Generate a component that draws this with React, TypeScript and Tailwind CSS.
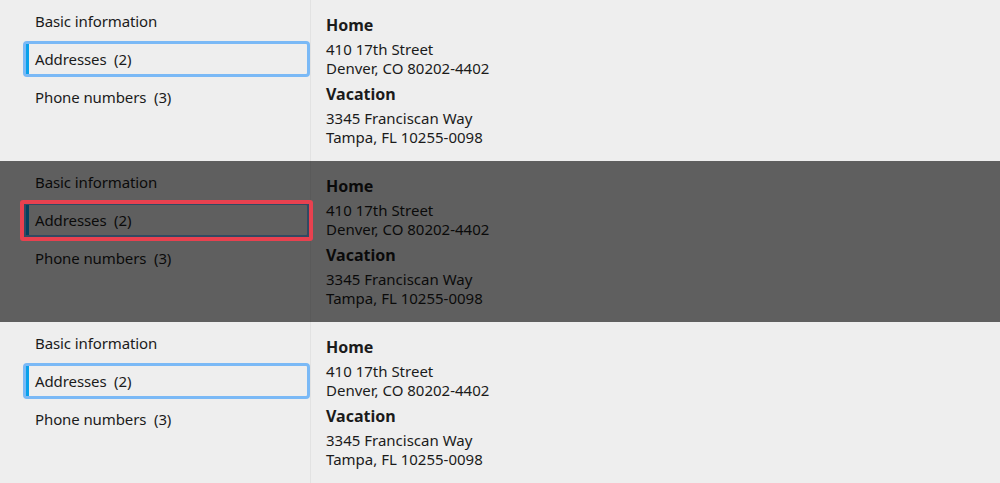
import React from "react";

type Mode = "focus" | "overlay" | "focus2";

function Panel({ mode }: { mode: Mode }) {
  const items = ["Basic information", "Addresses  (2)", "Phone numbers  (3)"];
  return (
    <div className="relative flex h-[161px] w-full shrink-0 bg-[#eeeeee]">
      <div className="flex w-[311px] shrink-0 flex-col gap-[2px] border-r border-[#e2e2e2] pt-[3px]">
        {items.map((t, i) => {
          const sel = i === 1;
          return (
            <div
              key={t}
              className={
                "ml-[23px] flex h-[36px] w-[287px] items-center rounded-[4px] border-[3px] " +
                (sel ? "border-[#7ab9f6]" : "border-transparent")
              }
            >
              <div className={"h-full w-[3px] " + (sel ? "bg-[#0aa1ea]" : "bg-transparent")} />
              <span className="whitespace-pre pl-[6px] text-[15px] leading-[20px] tracking-[-0.1px] text-[#1b1b1b]">{t}</span>
            </div>
          );
        })}
      </div>
      <div className="flex flex-col pl-[15px] pt-[14px] text-[15px] text-[#1b1b1b]">
        <div className="text-[16px] font-bold leading-[22px]">Home</div>
        <div className="mt-[4px] leading-[19px]">410 17th Street</div>
        <div className="leading-[19px]">Denver, CO 80202-4402</div>
        <div className="mt-[5px] text-[16px] font-bold leading-[22px]">Vacation</div>
        <div className="mt-[4px] leading-[19px]">3345 Franciscan Way</div>
        <div className="leading-[19px]">Tampa, FL 10255-0098</div>
      </div>
      {mode === "overlay" && (
        <>
          <div className="absolute inset-0 bg-black/60" />
          <div className="absolute left-[20px] top-[39px] h-[41px] w-[293px] rounded-[3px] border-[4px] border-[#e8414f]" />
        </>
      )}
    </div>
  );
}

export default function App() {
  return (
    <div
      className="flex h-[483px] w-[1000px] flex-col overflow-hidden bg-[#eeeeee]"
      style={{ fontFamily: '"Noto Sans", "Open Sans", sans-serif' }}
    >
      <Panel mode="focus" />
      <Panel mode="overlay" />
      <Panel mode="focus2" />
    </div>
  );
}
